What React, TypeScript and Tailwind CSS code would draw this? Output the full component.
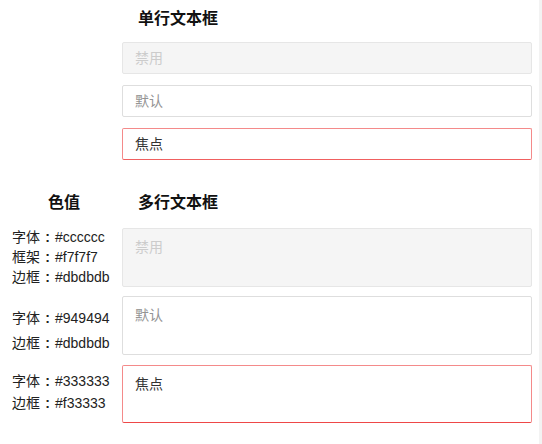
const FONT = "font-['Liberation_Sans','Noto_Sans_CJK_SC',sans-serif]";

const SingleInput = ({
  label,
  className,
}: {
  label: string;
  className: string;
}) => (
  <div
    className={`flex h-[32px] w-[410px] items-center rounded-[2px] border px-[12px] text-[14px] ${className}`}
  >
    {label}
  </div>
);

const TextArea = ({
  label,
  className,
  height,
}: {
  label: string;
  className: string;
  height: string;
}) => (
  <div
    className={`w-[410px] rounded-[2px] border px-[12px] pt-[8px] text-[14px] leading-[20px] ${height} ${className}`}
  >
    {label}
  </div>
);

// "字体 : #cccccc" -> name, centered colon, value
const ColorNotes = ({
  lines,
  className,
}: {
  lines: [string, string][];
  className: string;
}) => (
  <div className={`w-[122px] pl-[12px] text-[14px] text-[#222] ${className}`}>
    {lines.map(([name, value]) => (
      <div key={name} className="flex">
        <span>{name}</span>
        <span className="w-[15px] text-center font-bold">:</span>
        <span>{value}</span>
      </div>
    ))}
  </div>
);

const App = () => {
  return (
    <div className={`flex h-[444px] w-[542px] bg-white ${FONT}`}>
      <div className="flex-1">
        <h2 className="pl-[138px] pt-[7px] text-[16px] font-bold leading-[24px] text-[#111]">
          单行文本框
        </h2>

        <div className="ml-[122px] mt-[11px] flex flex-col gap-[11px]">
          <SingleInput
            label="禁用"
            className="border-[#e6e6e6] bg-[#f5f5f5] text-[#cccccc]"
          />
          <SingleInput
            label="默认"
            className="border-[#dedede] bg-white text-[#949494]"
          />
          <SingleInput
            label="焦点"
            className="border-[#f48a8a] border-b-[#f06060] bg-white text-[#333333]"
          />
        </div>

        <div className="mt-[31px] flex text-[16px] font-bold leading-[24px] text-[#111]">
          <h2 className="w-[138px] pl-[48px]">色值</h2>
          <h2>多行文本框</h2>
        </div>

        <div className="mt-[13px] flex flex-col">
          <div className="flex items-start">
            <ColorNotes
              className="-mt-[1px] leading-[20px]"
              lines={[
                ["字体", "#cccccc"],
                ["框架", "#f7f7f7"],
                ["边框", "#dbdbdb"],
              ]}
            />
            <TextArea
              label="禁用"
              height="h-[59px]"
              className="border-[#e6e6e6] bg-[#f5f5f5] text-[#cccccc]"
            />
          </div>

          <div className="mt-[9px] flex h-[59px] items-start">
            <ColorNotes
              className="pt-[10px] leading-[25px]"
              lines={[
                ["字体", "#949494"],
                ["边框", "#dbdbdb"],
              ]}
            />
            <TextArea
              label="默认"
              height="h-[59px]"
              className="border-[#dedede] bg-white text-[#949494]"
            />
          </div>

          <div className="mt-[10px] flex h-[58px] items-start">
            <ColorNotes
              className="pt-[5px] leading-[22px]"
              lines={[
                ["字体", "#333333"],
                ["边框", "#f33333"],
              ]}
            />
            <TextArea
              label="焦点"
              height="h-[58px]"
              className="border-[#f48a8a] border-b-[#ee4848] bg-white text-[#333333]"
            />
          </div>
        </div>
      </div>

      <div className="w-[3px] bg-[#f3f3f3]" />
    </div>
  );
};

export default App;
